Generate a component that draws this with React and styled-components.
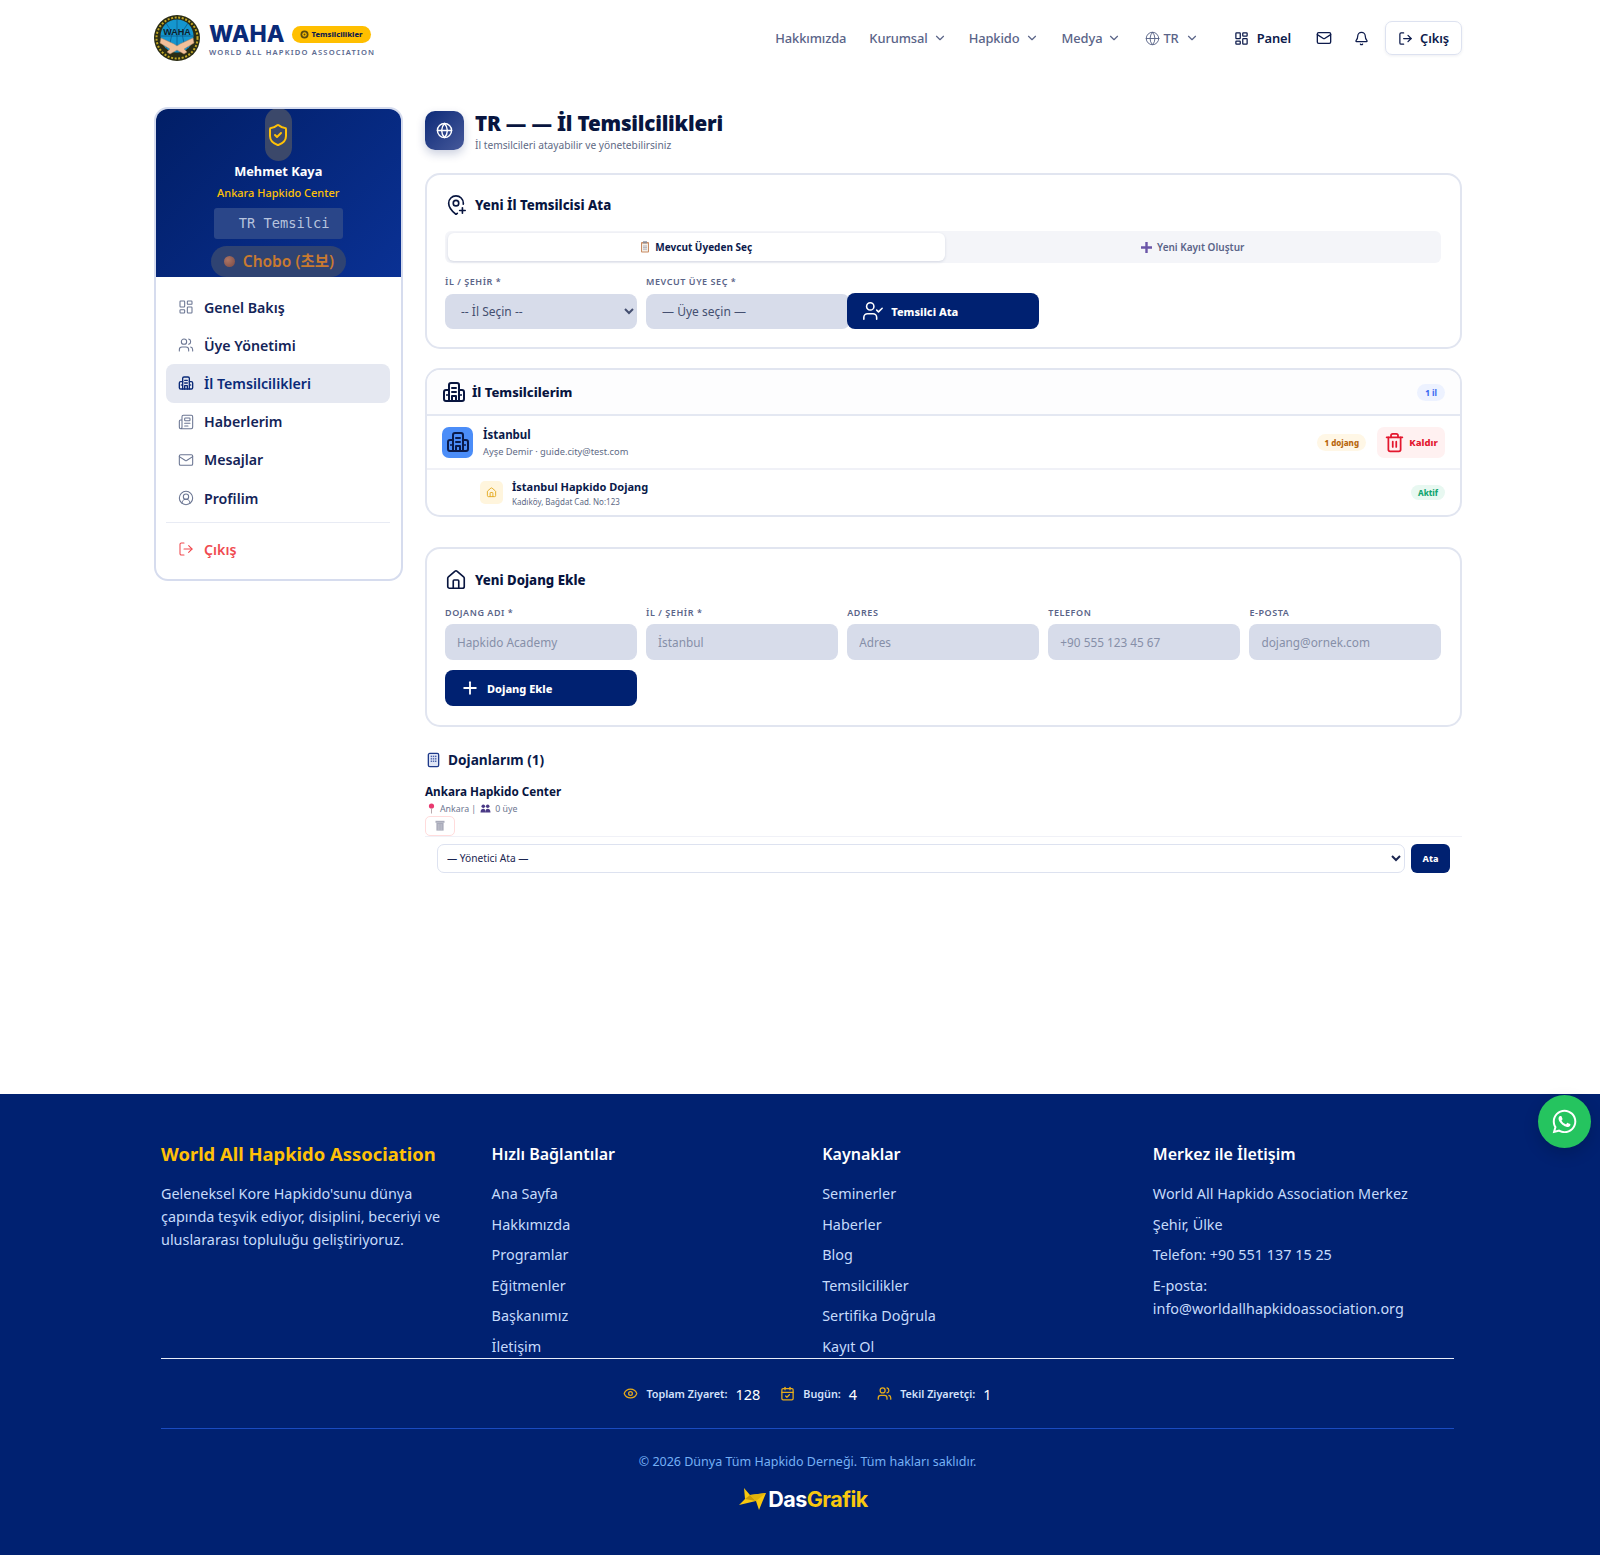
import React from 'react';
import styled, { createGlobalStyle } from 'styled-components';
import { LayoutDashboard, ChevronDown, Globe, Mail, Bell, LogOut, ShieldCheck, Users, Newspaper, CircleUserRound, MapPinPlus, UserCheck, Plus, Trash2, House, Eye, CalendarCheck } from 'lucide-react';
import { FaWhatsapp } from 'react-icons/fa';

const Navy = '#002171';

const Global = createGlobalStyle`
  * { box-sizing: border-box; }
  html, body { margin: 0; padding: 0; background: #fff; }
  body { font-family: "Noto Sans", "Noto Sans CJK KR", sans-serif; color: #0a1a4a; }
  select, input, button { font-family: inherit; }
`;

const Page = styled.div`position: relative; width: 1600px; height: 1555px; display: flex; flex-direction: column; overflow: hidden;`;
const Header = styled.header`height: 76px; padding: 0 138px 0 154px; display: flex; align-items: center; justify-content: space-between;`;
const Brand = styled.div`display: flex; align-items: center; gap: 9px;`;
const BrandText = styled.div`display: flex; flex-direction: column; gap: 1px; padding-top: 3px;`;
const BrandTop = styled.div`display: flex; align-items: center; gap: 7px; height: 24px;`;
const BrandName = styled.span`font-family: "Inter", sans-serif; font-size: 23px; font-weight: 800; color: #0a2a78; letter-spacing: .1px;`;
const BrandBadge = styled.span`display: inline-flex; align-items: center; gap: 3px; height: 17px; padding: 0 8px; border-radius: 9px; background: #ffbf00; font-size: 7.6px; font-weight: 800; color: #12204a;`;
const BrandSub = styled.span`font-size: 7.6px; font-weight: 600; letter-spacing: 1.16px; color: #5c6a90; white-space: nowrap;`;
const Nav = styled.nav`display: flex; align-items: center; font-size: 12.9px; letter-spacing: -.1px; font-weight: 500; color: #5a6488;`;
const NavItem = styled.span`display: inline-flex; align-items: center; gap: ${p => p.$gap || 5}px; margin-left: ${p => p.$ml || 0}px; color: ${p => p.$dark ? '#0d1b4c' : 'inherit'}; font-weight: ${p => p.$dark ? 600 : 500};`;
const ExitButton = styled.span`display: inline-flex; align-items: center; gap: 7px; height: 34px; padding: 0 12px; margin-left: 16px; border: 1px solid #dde2f0; border-radius: 7px; color: #0d1b4c; font-weight: 600; box-shadow: 0 1px 3px rgba(20,40,90,.08);`;

const Body = styled.div`flex: 1; padding: 31px 138px 0 154px; display: flex; gap: 22.5px; align-items: flex-start;`;
const Sidebar = styled.aside`width: 248.5px; flex: none; border: 2px solid #d6dcee; border-radius: 14px; overflow: hidden; background: #fff;`;
const Profile = styled.div`height: 170px; overflow: hidden; display: flex; flex-direction: column; align-items: center; background: linear-gradient(135deg, #011e66, #0a3194); margin: -2px -2px 0; padding-top: 1px;`;
const Avatar = styled.div`width: 27px; height: 53px; border-radius: 14px; background: #3b486a; display: flex; align-items: center; justify-content: center; color: #ffc107; flex: none;`;
const ProfileName = styled.div`font-size: 12.8px; font-weight: 700; color: #fff; line-height: 20px;`;
const ProfileDojang = styled.div`margin-top: 4px; font-size: 11px; font-weight: 500; color: #ffc107; line-height: 16px;`;
const RoleBox = styled.div`margin-top: 7px; width: 129px; height: 31px; padding-left: 25px; border-radius: 3px; background: #2a4689; color: #b7c4de; font-family: "DejaVu Sans Mono", monospace; font-size: 13.7px; line-height: 31px; white-space: nowrap;`;
const RankPill = styled.div`margin-top: 7px; width: 135px; height: 31px; flex: none; padding: 4px 0 0 13px; border-radius: 16px; background: #2f4372; color: #c87a30; font-size: 15.5px; font-weight: 600; display: flex; align-items: flex-start; gap: 8px; white-space: nowrap; line-height: 22px;`;
const RankDot = styled.i`width: 11px; height: 11px; margin-top: 6px; border-radius: 50%; background: radial-gradient(circle at 35% 35%, #ad7565, #7b4a44); flex: none;`;
const SideMenu = styled.div`padding: 11px 11px 11px 10px;`;
const SideItem = styled.div`height: 38.2px; display: flex; align-items: center; gap: 10px; padding-left: 12px; border-radius: 8px; background: ${p => p.$active ? '#e5e8f1' : 'transparent'}; color: ${p => p.$red ? '#f04a50' : p.$active ? '#0a2a78' : '#142458'}; font-size: 14.2px; font-weight: 600; & svg { color: ${p => p.$red ? '#f04a50' : p.$active ? '#0a2a78' : '#6b7693'}; }`;
const SideDivider = styled.div`height: 1px; background: #e8ebf4; margin: 5px 0 7px;`;

const Main = styled.main`flex: 1; min-width: 0;`;
const TitleRow = styled.div`display: flex; align-items: center; gap: 11px; height: 40px; margin: 3px 0 23px;`;
const TitleIcon = styled.div`width: 39px; height: 39px; border-radius: 10px; background: linear-gradient(135deg, #0d2a78, #46599a); color: #fff; display: flex; align-items: center; justify-content: center; box-shadow: 0 4px 10px rgba(20,40,110,.22);`;
const TitleText = styled.div`display: flex; flex-direction: column; align-self: flex-start;`;
const Title = styled.h1`margin: 0; font-size: 20.6px; font-weight: 900; line-height: 26px; color: #08153f; letter-spacing: -.2px;`;
const Subtitle = styled.p`margin: 1.5px 0 0; font-size: 10.2px; line-height: 14px; color: #606a85;`;
const Card = styled.section`border: 2px solid #e1e5f0; border-radius: 15px; background: #fff; padding: ${p => p.$pad || '0'}; margin-bottom: ${p => p.$mb || 0}px; overflow: hidden;`;
const CardTitle = styled.h2`margin: 0 0 ${p => p.$mb || 14}px; display: flex; align-items: center; gap: 8px; font-size: 13.2px; font-weight: 800; color: #08153f; height: 25px;`;
const Tabs = styled.div`display: grid; grid-template-columns: 1fr 1fr; height: 32px; border-radius: 6px; background: #f4f5f9; margin-bottom: 13px; padding: 2px 0 2px 3px;`;
const Tab = styled.div`display: flex; align-items: center; justify-content: center; gap: 5px; border-radius: 6px; font-size: 10px; font-weight: ${p => p.$active ? 700 : 600}; color: ${p => p.$active ? '#0b1a4c' : '#5a6488'}; background: ${p => p.$active ? '#fff' : 'transparent'}; box-shadow: ${p => p.$active ? '0 1px 3px rgba(20,40,90,.14)' : 'none'};`;
const FormGrid = styled.div`display: grid; grid-template-columns: repeat(5, 1fr); gap: 10px 9.6px; align-items: end;`;
const Field = styled.label`display: flex; flex-direction: column; gap: 5px; min-width: 0;`;
const Label = styled.span`font-size: 9px; font-weight: 600; color: #5a6488; letter-spacing: .55px; line-height: 12px;`;
const Select = styled.select`height: 35px; margin-top: 1px; width: 100%; border: 0; border-radius: 8px; background: #d7dcea; padding: 0 8px 0 12px; font-size: 12px; color: #444f70;`;
const MemberSelect = styled(Select)`appearance: none; padding-left: 16px; width: calc(100% + 12px);`;
const Input = styled.input`height: 36px; width: 100%; border: 0; border-radius: 8px; background: #d7dcea; padding: 0 12px; font-size: 11.8px; &::placeholder { color: #868fa8; opacity: 1; }`;
const PrimaryButton = styled.div`height: 36px; display: flex; align-items: center; gap: 7px; padding-left: 15px; border-radius: 8px; background: ${Navy}; color: #fff; font-size: 11px; font-weight: 800;`;
const ListHead = styled.div`height: 46px; display: flex; align-items: center; justify-content: space-between; padding: 0 15px; background: #fdfdfe; border-bottom: 2px solid #e4e8f2;`;
const ListTitle = styled.div`display: flex; align-items: center; gap: 6px; font-size: 13px; font-weight: 800; color: #08153f;`;
const Chip = styled.span`display: inline-flex; align-items: center; justify-content: center; border-radius: 9px; height: ${p => p.$h || 17}px; padding: 0 ${p => p.$px || 8}px; background: ${p => p.$bg}; color: ${p => p.$fg}; font-size: 8px; font-weight: 800; white-space: nowrap;`;
const CityRow = styled.div`height: 54px; display: flex; align-items: center; padding: 0 15px; gap: 10px; border-bottom: 2px solid #f0f1f7;`;
const CityIcon = styled.div`width: 31px; height: 31px; border-radius: 7px; background: #4b8df8; color: #0a1a4a; display: flex; align-items: center; justify-content: center;`;
const Grow = styled.div`flex: 1; min-width: 0;`;
const RowName = styled.div`font-size: ${p => p.$s || 11.5}px; font-weight: 700; line-height: 17px; color: #0a1a4a;`;
const RowMeta = styled.div`font-size: ${p => p.$s || 9.3}px; line-height: 13px; color: #606a85; margin-top: ${p => p.$mt ?? 2}px;`;
const RemoveButton = styled.div`margin-left: 1px; width: 68px; height: 31px; border-radius: 7px; background: #fff1f1; color: #e3172e; display: flex; align-items: center; justify-content: center; gap: 4px; font-size: 9.5px; font-weight: 800;`;
const DojangRow = styled.div`height: 45px; display: flex; align-items: center; padding: 0 15px 0 53px; gap: 9px;`;
const DojangIcon = styled.div`width: 23px; height: 23px; border-radius: 5px; background: #fff5dd; color: #e3a91f; display: flex; align-items: center; justify-content: center;`;
const SectionHead = styled.div`display: flex; align-items: center; gap: 7px; margin: 20.5px 0 0 1px; height: 24px; font-size: 13.7px; font-weight: 700; color: #0a1a4a;`;
const DojangName = styled.div`margin-top: 11px; font-size: 11.7px; font-weight: 700; line-height: 17px; color: #08153f;`;
const DojangMeta = styled.div`display: flex; align-items: center; gap: 4px; margin: 3px 0 0 2px; font-size: 8.8px; line-height: 12px; color: #6d7690;`;
const SmallDelete = styled.div`width: 30px; height: 20px; margin-top: 1px; border: 1px solid #ffdcdc; border-radius: 5px; display: flex; align-items: center; justify-content: center; color: #a7a9b8;`;
const Assign = styled.div`display: flex; align-items: center; gap: 6px; padding: 7px 12px 0 12px; border-top: 1px solid #f0f1f7;`;
const AssignSelect = styled.select`flex: 1; height: 29px; border: 1px solid #dde2f0; border-radius: 7px; background: #fff; padding: 0 3px 0 5px; font-size: 10.2px; color: #1a2550;`;
const AssignButton = styled.div`width: 39px; height: 29px; border-radius: 6px; background: ${Navy}; color: #fff; display: flex; align-items: center; justify-content: center; font-size: 9px; font-weight: 800;`;

const Footer = styled.footer`position: relative; height: 461px; background: ${Navy}; padding: 46px 146px 0 161px; flex: none;`;
const FooterGrid = styled.div`display: grid; grid-template-columns: repeat(4, 1fr); column-gap: 29.4px; height: 219px; border-bottom: 1px solid #e8edf8;`;
const FooterCol = styled.div`min-width: 0;`;
const BrandHeading = styled.h3`margin: 0 0 14px; font-size: 18.4px; line-height: 28px; font-weight: 700; color: #ffc107; white-space: nowrap;`;
const FooterHeading = styled.h3`margin: 0 0 11px; font-size: 16px; line-height: 28px; font-weight: 600; color: #fff;`;
const FooterText = styled.p`margin: 0; font-size: 14.4px; line-height: 23px; color: #c6dbfb;`;
const FooterLink = styled.div`font-size: 14.4px; line-height: 30.6px; color: #c6dbfb; &.tight { line-height: 23px; padding-top: 3px; }`;
const Stats = styled.div`height: 70px; display: flex; align-items: center; justify-content: center; gap: 20px; color: #fff; border-bottom: 1px solid #1a4bc0;`;
const Stat = styled.div`display: flex; align-items: center; gap: 7px; font-size: 10.8px; font-weight: 600; color: #d4e2fb; & svg { color: #e6ac1b; margin-right: 1px; } & b { font-size: 14.5px; font-weight: 400; color: #fff; margin-left: 1px; }`;
const Copyright = styled.div`margin-top: 23px; text-align: center; font-size: 12.5px; line-height: 20px; color: #75b0f5;`;
const Das = styled.div`margin-top: 14px; display: flex; align-items: center; justify-content: center; gap: 1px; padding-right: 8px; font-family: "Inter", sans-serif; font-size: 21.5px; font-weight: 700; letter-spacing: -.5px; color: #fff; & span { color: #f9c80e; }`;
const Whats = styled.div`position: absolute; top: 1px; right: 9px; width: 53px; height: 53px; border-radius: 50%; background: #25c45f; color: #fff; display: flex; align-items: center; justify-content: center; box-shadow: 0 6px 16px rgba(0,0,0,.16);`;

const CityBuilding = ({ size = 20, sw = 2 }) => (
  <svg width={size} height={size} viewBox="0 0 24 24" fill="none" stroke="currentColor" strokeWidth={sw} strokeLinecap="round" strokeLinejoin="round">
    <path d="M7 21V5a2 2 0 0 1 2-2h6a2 2 0 0 1 2 2v16" />
    <path d="M7 10H4a2 2 0 0 0-2 2v7a2 2 0 0 0 2 2h16a2 2 0 0 0 2-2v-7a2 2 0 0 0-2-2h-3" />
    <path d="M10 8h4M10 12h4M10 21v-5h4v5" />
    <path d="M5 15v.01M19 15v.01" />
  </svg>
);
const Logo = () => (
  <svg width="46" height="46" viewBox="0 0 46 46">
    <circle cx="23" cy="23" r="23" fill="#2a2c14" />
    <circle cx="23" cy="23" r="20.5" fill="none" stroke="#c3a825" strokeWidth="2" strokeDasharray="2 1.6" />
    <circle cx="23" cy="21" r="16.5" fill="#1496cf" />
    <path d="M6.5 21h33M23 4.5v33M12 8q11 13 0 26M34 8q-11 13 0 26" fill="none" stroke="#0c5c8c" strokeWidth=".8" />
    <text x="23" y="20" textAnchor="middle" fontFamily="Liberation Sans" fontSize="9" fontWeight="700" fill="#10202a">WAHA</text>
    <path d="M7 23l13 6 3 2 3-2 13-6 1 5-10 6 3 3-3 2-7-4-7 4-3-2 3-3-10-6z" fill="#f0c09a" stroke="#b5835f" strokeWidth=".5" />
  </svg>
);
const Clipboard = () => (
  <svg width="10" height="12" viewBox="0 0 10 12"><rect x="1" y="1" width="8" height="10.5" rx="1" fill="#c98b62" /><rect x="2" y="2.5" width="6" height="8" fill="#f3efe8" /><rect x="3" y=".3" width="4" height="2" fill="#8c8c96" /><path d="M3 5h4M3 6.6h4M3 8.2h4" stroke="#9a9aa6" strokeWidth=".7" /></svg>
);
const PurplePlus = () => (
  <svg width="11" height="11" viewBox="0 0 11 11"><path d="M4.3 0h2.4v4.3H11v2.4H6.7V11H4.3V6.7H0V4.3h4.3z" fill="#6a55a8" /></svg>
);
const Pin = () => (
  <svg width="9" height="11" viewBox="0 0 9 11"><circle cx="4.5" cy="3" r="2.6" fill="#e9396f" /><path d="M4.5 5v5.5" stroke="#b9a9ad" strokeWidth="1" /></svg>
);
const People = () => (
  <svg width="11" height="9" viewBox="0 0 11 9" fill="#4a3a86"><circle cx="3.3" cy="2.3" r="1.8" /><circle cx="7.7" cy="2.3" r="1.8" /><path d="M.5 8.5c0-3 1.4-3.8 2.8-3.8s2.2.8 2.2 3.8zM5.5 8.5c0-3 .8-3.8 2.2-3.8s2.8.8 2.8 3.8z" /></svg>
);
const GrayBin = () => (
  <svg width="10" height="11" viewBox="0 0 10 11"><rect x=".5" y=".8" width="9" height="2" fill="#a9abba" /><rect x="1.4" y="3" width="7.2" height="7.6" fill="#a9abba" /><path d="M3.3 4v6M5 4v6M6.7 4v6" stroke="#c9cad4" strokeWidth=".6" /></svg>
);
const FootBuilding = () => (
  <svg width="15" height="16" viewBox="0 0 16 16"><rect x="2.5" y="1" width="11" height="14" rx="1.5" fill="#dfe5f5" stroke="#1f3a8a" strokeWidth="1.4" /><g fill="#4a62ab"><rect x="5" y="3.4" width="1.5" height="1.5" /><rect x="7.3" y="3.4" width="1.5" height="1.5" /><rect x="9.6" y="3.4" width="1.5" height="1.5" /><rect x="5" y="6" width="1.5" height="1.5" /><rect x="7.3" y="6" width="1.5" height="1.5" /><rect x="9.6" y="6" width="1.5" height="1.5" /><rect x="5" y="8.6" width="1.5" height="1.5" /><rect x="7.3" y="8.6" width="1.5" height="1.5" /><rect x="9.6" y="8.6" width="1.5" height="1.5" /></g></svg>
);
const DasMark = () => (
  <svg width="28" height="22" viewBox="0 0 28 22"><path d="M5 0l6 7L27 5 20 22l-3-9L0 17l6-6z" fill="#f9c80e" /><path d="M11 7l6 6-11-2z" fill="#c99a06" /><path d="M11 7l16-2-10 8z" fill="#e2b30a" /></svg>
);
const BadgeMark = () => (
  <svg width="9" height="9" viewBox="0 0 9 9"><circle cx="4.5" cy="4.5" r="4" fill="#5a4a10" /><circle cx="4.5" cy="4.5" r="2.2" fill="#ffbf00" /><circle cx="4.5" cy="4.5" r="1" fill="#5a4a10" /></svg>
);

const menu = [
  ['Genel Bakış', <LayoutDashboard size={16} strokeWidth={1.6} />],
  ['Üye Yönetimi', <Users size={16} strokeWidth={1.6} />],
  ['İl Temsilcilikleri', <CityBuilding size={16} />, true],
  ['Haberlerim', <Newspaper size={16} strokeWidth={1.6} />],
  ['Mesajlar', <Mail size={16} strokeWidth={1.6} />],
  ['Profilim', <CircleUserRound size={16} strokeWidth={1.6} />],
];
const quick = ['Ana Sayfa', 'Hakkımızda', 'Programlar', 'Eğitmenler', 'Başkanımız', 'İletişim'];
const res = ['Seminerler', 'Haberler', 'Blog', 'Temsilcilikler', 'Sertifika Doğrula', 'Kayıt Ol'];
const dojangFields = [
  ['DOJANG ADI *', 'Hapkido Academy'],
  ['İL / ŞEHİR *', 'İstanbul'],
  ['ADRES', 'Adres'],
  ['TELEFON', '+90 555 123 45 67'],
  ['E-POSTA', 'dojang@ornek.com'],
];

export default function App() {
  return (
    <Page>
      <Global />
      <Header>
        <Brand>
          <Logo />
          <BrandText>
            <BrandTop><BrandName>WAHA</BrandName><BrandBadge><BadgeMark />Temsilcilikler</BrandBadge></BrandTop>
            <BrandSub>WORLD ALL HAPKIDO ASSOCIATION</BrandSub>
          </BrandText>
        </Brand>
        <Nav>
          <NavItem>Hakkımızda</NavItem>
          <NavItem $ml={23}>Kurumsal <ChevronDown size={14} /></NavItem>
          <NavItem $ml={22}>Hapkido <ChevronDown size={14} /></NavItem>
          <NavItem $ml={23}>Medya <ChevronDown size={14} /></NavItem>
          <NavItem $ml={24} $gap={3}><Globe size={15} strokeWidth={1.5} />TR<ChevronDown size={14} style={{ marginLeft: 3 }} /></NavItem>
          <NavItem $ml={35} $dark $gap={8}><LayoutDashboard size={15} />Panel</NavItem>
          <NavItem $ml={25} $dark><Mail size={16} /></NavItem>
          <NavItem $ml={22} $dark><Bell size={15} /></NavItem>
          <ExitButton><LogOut size={15} />Çıkış</ExitButton>
        </Nav>
      </Header>

      <Body>
        <Sidebar>
          <Profile>
            <Avatar><ShieldCheck size={24} strokeWidth={2} /></Avatar>
            <ProfileName>Mehmet Kaya</ProfileName>
            <ProfileDojang>Ankara Hapkido Center</ProfileDojang>
            <RoleBox>TR Temsilci</RoleBox>
            <RankPill><RankDot />Chobo (초보)</RankPill>
          </Profile>
          <SideMenu>
            {menu.map(([t, ic, a]) => <SideItem key={t} $active={a}>{ic}{t}</SideItem>)}
            <SideDivider />
            <SideItem $red><LogOut size={16} strokeWidth={1.6} />Çıkış</SideItem>
          </SideMenu>
        </Sidebar>

        <Main>
          <TitleRow>
            <TitleIcon><Globe size={17} /></TitleIcon>
            <TitleText>
              <Title>TR — — İl Temsilcilikleri</Title>
              <Subtitle>İl temsilcileri atayabilir ve yönetebilirsiniz</Subtitle>
            </TitleText>
          </TitleRow>

          <Card $pad="17px 19px 18px 18px" $mb={19}>
            <CardTitle><MapPinPlus size={22} strokeWidth={1.8} />Yeni İl Temsilcisi Ata</CardTitle>
            <Tabs>
              <Tab $active><Clipboard />Mevcut Üyeden Seç</Tab>
              <Tab><PurplePlus />Yeni Kayıt Oluştur</Tab>
            </Tabs>
            <FormGrid>
              <Field><Label>İL / ŞEHİR *</Label><Select defaultValue=""><option value="">-- İl Seçin --</option></Select></Field>
              <Field><Label>MEVCUT ÜYE SEÇ *</Label><MemberSelect defaultValue=""><option value="">— Üye seçin —</option></MemberSelect></Field>
              <PrimaryButton><UserCheck size={22} strokeWidth={1.7} />Temsilci Ata</PrimaryButton>
            </FormGrid>
          </Card>

          <Card $mb={30}>
            <ListHead>
              <ListTitle><CityBuilding size={24} />İl Temsilcilerim</ListTitle>
              <Chip $bg="#edf2ff" $fg="#3d6df2" $px={8}>1 il</Chip>
            </ListHead>
            <CityRow>
              <CityIcon><CityBuilding size={24} /></CityIcon>
              <Grow>
                <RowName>İstanbul</RowName>
                <RowMeta>Ayşe Demir · guide.city@test.com</RowMeta>
              </Grow>
              <Chip $bg="#fff7e6" $fg="#b8660c" $h={17} $px={7}>1 dojang</Chip>
              <RemoveButton><Trash2 size={21} strokeWidth={2} />Kaldır</RemoveButton>
            </CityRow>
            <DojangRow>
              <DojangIcon><House size={11} /></DojangIcon>
              <Grow>
                <RowName $s={11}>İstanbul Hapkido Dojang</RowName>
                <RowMeta $s={8} $mt={0}>Kadıköy, Bağdat Cad. No:123</RowMeta>
              </Grow>
              <Chip $bg="#e8f8f1" $fg="#10a56f" $h={15} $px={7}>Aktif</Chip>
            </DojangRow>
          </Card>

          <Card $pad="18px 19px 19px 18px">
            <CardTitle $mb={15}><House size={22} strokeWidth={1.8} />Yeni Dojang Ekle</CardTitle>
            <FormGrid>
              {dojangFields.map(([l, p]) => <Field key={l}><Label>{l}</Label><Input placeholder={p} readOnly /></Field>)}
              <PrimaryButton><Plus size={20} strokeWidth={2.2} />Dojang Ekle</PrimaryButton>
            </FormGrid>
          </Card>

          <SectionHead><FootBuilding />Dojanlarım (1)</SectionHead>
          <DojangName>Ankara Hapkido Center</DojangName>
          <DojangMeta><Pin />Ankara | <People /> 0 üye</DojangMeta>
          <SmallDelete><GrayBin /></SmallDelete>
          <Assign>
            <AssignSelect defaultValue=""><option value="">— Yönetici Ata —</option></AssignSelect>
            <AssignButton>Ata</AssignButton>
          </Assign>
        </Main>
      </Body>

      <Footer>
        <Whats><FaWhatsapp size={27} /></Whats>
        <FooterGrid>
          <FooterCol>
            <BrandHeading>World All Hapkido Association</BrandHeading>
            <FooterText>Geleneksel Kore Hapkido'sunu dünya çapında teşvik ediyor, disiplini, beceriyi ve uluslararası topluluğu geliştiriyoruz.</FooterText>
          </FooterCol>
          <FooterCol>
            <FooterHeading>Hızlı Bağlantılar</FooterHeading>
            {quick.map(t => <FooterLink key={t}>{t}</FooterLink>)}
          </FooterCol>
          <FooterCol>
            <FooterHeading>Kaynaklar</FooterHeading>
            {res.map(t => <FooterLink key={t}>{t}</FooterLink>)}
          </FooterCol>
          <FooterCol>
            <FooterHeading>Merkez ile İletişim</FooterHeading>
            <FooterLink>World All Hapkido Association Merkez</FooterLink>
            <FooterLink>Şehir, Ülke</FooterLink>
            <FooterLink>Telefon: +90 551 137 15 25</FooterLink>
            <FooterLink className="tight">E-posta: info@worldallhapkidoassociation.org</FooterLink>
          </FooterCol>
        </FooterGrid>
        <Stats>
          <Stat><Eye size={15} />Toplam Ziyaret: <b>128</b></Stat>
          <Stat><CalendarCheck size={15} />Bugün: <b>4</b></Stat>
          <Stat><Users size={15} />Tekil Ziyaretçi: <b>1</b></Stat>
        </Stats>
        <Copyright>© 2026 Dünya Tüm Hapkido Derneği. Tüm hakları saklıdır.</Copyright>
        <Das><DasMark /><div>Das<span>Grafik</span></div></Das>
      </Footer>
    </Page>
  );
}
